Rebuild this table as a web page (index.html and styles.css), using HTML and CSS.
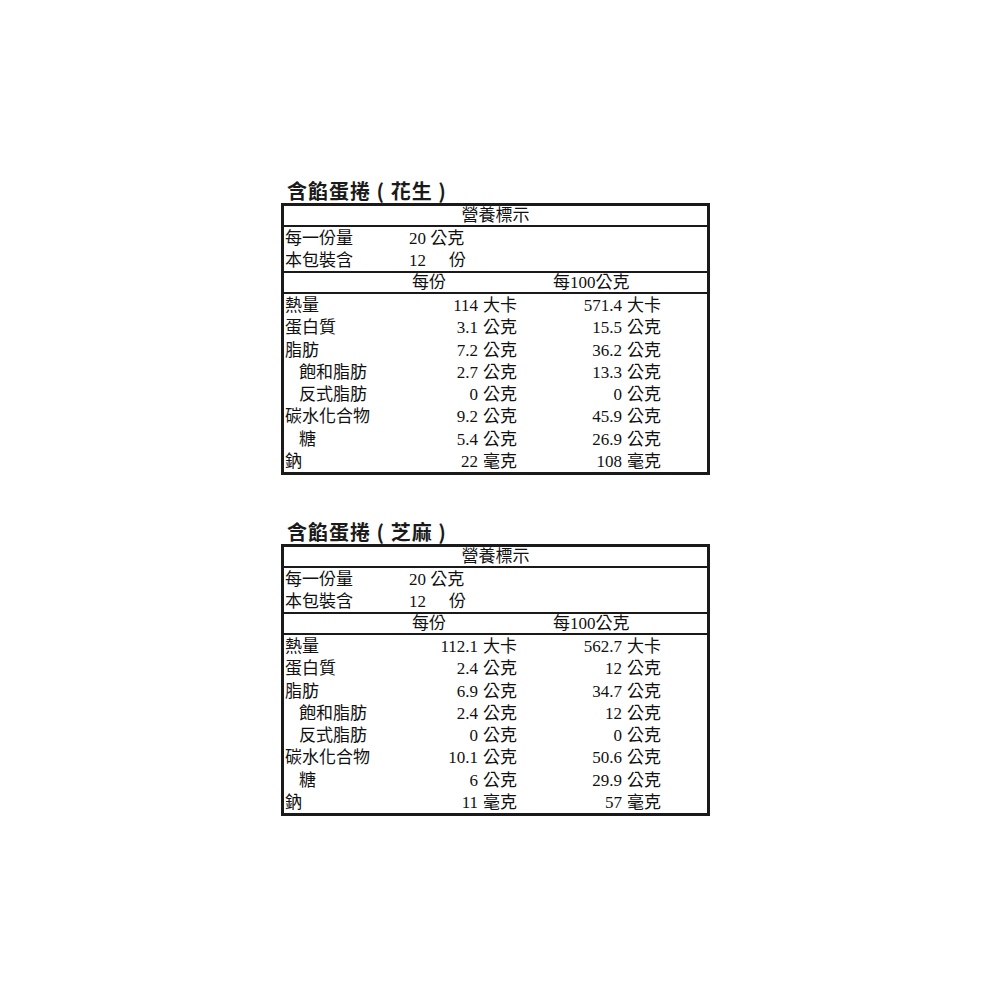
FILE: index.html
```html
<!DOCTYPE html>
<html lang="zh-Hant">
<head>
<meta charset="utf-8">
<title>營養標示</title>
<link rel="stylesheet" href="styles.css">
</head>
<body>
<main class="page">
  <section class="panel">
    <h2 class="product">含餡蛋捲 ( 花生 )</h2>
    <div class="box">
      <div class="row title-row">營養標示</div>
      <div class="info">
        <div class="info-row"><span>每一份量</span><span class="span2">20 公克</span></div>
        <div class="info-row"><span>本包裝含</span><span>12</span><span>份</span></div>
      </div>
      <div class="row head-row"><span></span><span>每份</span><span>每100公克</span></div>
      <div class="data">
        <div class="d-row"><span class="lbl">熱量</span><span class="num">114</span><span class="unit">大卡</span><span class="num">571.4</span><span class="unit">大卡</span></div>
        <div class="d-row"><span class="lbl">蛋白質</span><span class="num">3.1</span><span class="unit">公克</span><span class="num">15.5</span><span class="unit">公克</span></div>
        <div class="d-row"><span class="lbl">脂肪</span><span class="num">7.2</span><span class="unit">公克</span><span class="num">36.2</span><span class="unit">公克</span></div>
        <div class="d-row"><span class="lbl sub">飽和脂肪</span><span class="num">2.7</span><span class="unit">公克</span><span class="num">13.3</span><span class="unit">公克</span></div>
        <div class="d-row"><span class="lbl sub">反式脂肪</span><span class="num">0</span><span class="unit">公克</span><span class="num">0</span><span class="unit">公克</span></div>
        <div class="d-row"><span class="lbl">碳水化合物</span><span class="num">9.2</span><span class="unit">公克</span><span class="num">45.9</span><span class="unit">公克</span></div>
        <div class="d-row"><span class="lbl sub">糖</span><span class="num">5.4</span><span class="unit">公克</span><span class="num">26.9</span><span class="unit">公克</span></div>
        <div class="d-row"><span class="lbl">鈉</span><span class="num">22</span><span class="unit">毫克</span><span class="num">108</span><span class="unit">毫克</span></div>
      </div>
    </div>
  </section>

  <section class="panel">
    <h2 class="product">含餡蛋捲 ( 芝麻 )</h2>
    <div class="box">
      <div class="row title-row">營養標示</div>
      <div class="info">
        <div class="info-row"><span>每一份量</span><span class="span2">20 公克</span></div>
        <div class="info-row"><span>本包裝含</span><span>12</span><span>份</span></div>
      </div>
      <div class="row head-row"><span></span><span>每份</span><span>每100公克</span></div>
      <div class="data">
        <div class="d-row"><span class="lbl">熱量</span><span class="num">112.1</span><span class="unit">大卡</span><span class="num">562.7</span><span class="unit">大卡</span></div>
        <div class="d-row"><span class="lbl">蛋白質</span><span class="num">2.4</span><span class="unit">公克</span><span class="num">12</span><span class="unit">公克</span></div>
        <div class="d-row"><span class="lbl">脂肪</span><span class="num">6.9</span><span class="unit">公克</span><span class="num">34.7</span><span class="unit">公克</span></div>
        <div class="d-row"><span class="lbl sub">飽和脂肪</span><span class="num">2.4</span><span class="unit">公克</span><span class="num">12</span><span class="unit">公克</span></div>
        <div class="d-row"><span class="lbl sub">反式脂肪</span><span class="num">0</span><span class="unit">公克</span><span class="num">0</span><span class="unit">公克</span></div>
        <div class="d-row"><span class="lbl">碳水化合物</span><span class="num">10.1</span><span class="unit">公克</span><span class="num">50.6</span><span class="unit">公克</span></div>
        <div class="d-row"><span class="lbl sub">糖</span><span class="num">6</span><span class="unit">公克</span><span class="num">29.9</span><span class="unit">公克</span></div>
        <div class="d-row"><span class="lbl">鈉</span><span class="num">11</span><span class="unit">毫克</span><span class="num">57</span><span class="unit">毫克</span></div>
      </div>
    </div>
  </section>
</main>
</body>
</html>
```

FILE: styles.css
```css
html, body {
  margin: 0;
  padding: 0;
  background: #ffffff;
}

body {
  color: #111;
  font-family: "Liberation Serif", "Noto Sans CJK TC", serif;
  font-size: 17px;
}

.page {
  display: flex;
  flex-direction: column;
  gap: 45px;
  padding: 179px 0 0 281px;
}

.panel {
  width: 429px;
}

.product {
  margin: 0;
  padding-left: 6px;
  height: 24px;
  line-height: 24px;
  font-family: "Noto Sans CJK TC", sans-serif;
  font-weight: 700;
  font-size: 20px;
  letter-spacing: 1px;
  color: #1a1a1a;
  white-space: nowrap;
}

.box {
  border: 3px solid #1a1a1a;
  display: flex;
  flex-direction: column;
}

.row,
.info-row,
.d-row {
  line-height: 19px;
  white-space: nowrap;
}

.title-row {
  height: 19px;
  text-align: center;
  border-bottom: 2px solid #1a1a1a;
}

.info {
  display: flex;
  flex-direction: column;
  border-bottom: 2px solid #1a1a1a;
}

.info-row {
  display: grid;
  grid-template-columns: 124px 40px auto;
  height: 22px;
  line-height: 23px;
  padding-left: 1px;
}

.info-row .span2 {
  grid-column: 2 / span 2;
}

.head-row {
  display: grid;
  grid-template-columns: 128px 141px auto;
  height: 19px;
  line-height: 20px;
  border-bottom: 2px solid #1a1a1a;
}

.data {
  display: flex;
  flex-direction: column;
}

.d-row {
  display: grid;
  grid-template-columns: 140px 54px 39px 105px auto;
  height: 22.25px;
  line-height: 23px;
}

.lbl {
  padding-left: 1px;
}

.lbl.sub {
  padding-left: 15px;
}

.num {
  text-align: right;
}

.unit {
  padding-left: 5px;
}
```
